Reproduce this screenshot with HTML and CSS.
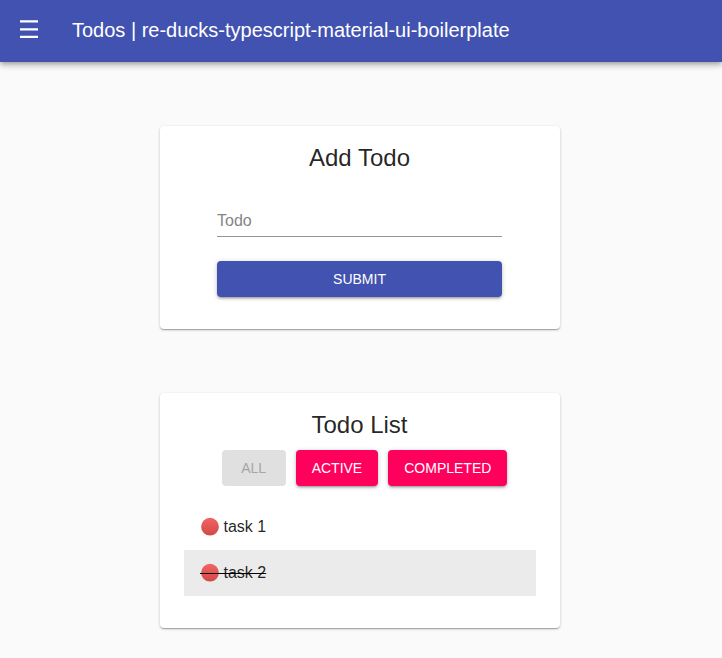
FILE: index.html
```html
<!DOCTYPE html>
<html lang="en">
<head>
<meta charset="utf-8">
<meta name="viewport" content="width=device-width, initial-scale=1">
<title>Todos</title>
<link rel="stylesheet" href="styles.css">
</head>
<body>
<header class="app-bar">
  <button class="menu-button" type="button" aria-label="Menu">
    <svg width="18" height="20" viewBox="0 0 18 20" aria-hidden="true"><path d="M0 0.3h18v2.2H0zM0 8.3h18v2.2H0zM0 15.8h18v2.2H0z" fill="currentColor"/></svg>
  </button>
  <h1 class="app-title">Todos | re-ducks-typescript-material-ui-boilerplate</h1>
</header>
<main class="content">
  <section class="card">
    <h2 class="card-title">Add Todo</h2>
    <form class="todo-form">
      <input class="text-field" type="text" placeholder="Todo" aria-label="Todo">
      <button class="button primary" type="button">SUBMIT</button>
    </form>
  </section>
  <section class="card">
    <h2 class="card-title">Todo List</h2>
    <div class="filters">
      <button class="button" type="button" disabled>ALL</button>
      <button class="button secondary" type="button">ACTIVE</button>
      <button class="button secondary" type="button">COMPLETED</button>
    </div>
    <ul class="todo-list">
      <li class="todo">
        <svg class="dot" viewBox="0 0 18 18" aria-hidden="true"><defs><linearGradient id="red" x1="0" y1="0" x2="0" y2="1"><stop offset="0" stop-color="#f06464"/><stop offset="1" stop-color="#d34747"/></linearGradient></defs><circle cx="10" cy="8.7" r="8.9" fill="url(#red)"/></svg>
        <span>task 1</span>
      </li>
      <li class="todo completed">
        <svg class="dot" viewBox="0 0 18 18" aria-hidden="true"><circle cx="10" cy="8.7" r="8.9" fill="url(#red)"/><path d="M0 9h25v1H0z" fill="#000"/></svg>
        <span>task 2</span>
      </li>
    </ul>
  </section>
</main>
</body>
</html>
```
FILE: styles.css
```css
* {
  box-sizing: border-box;
}

body {
  margin: 0;
  background: #fafafa;
  color: rgba(0, 0, 0, 0.87);
  font-family: "Liberation Sans", Arial, sans-serif;
  font-size: 16px;
}

.app-bar {
  display: flex;
  align-items: center;
  gap: 22px;
  padding: 6px 8px 8px;
  background: #4152b0;
  color: #fff;
  box-shadow: 0 2px 4px -1px rgba(0, 0, 0, 0.2), 0 4px 5px 0 rgba(0, 0, 0, 0.14), 0 1px 10px 0 rgba(0, 0, 0, 0.12);
}

.menu-button {
  display: flex;
  padding: 14px 12px;
  border: 0;
  background: none;
  color: inherit;
}

.app-title {
  margin: 0;
  font-size: 20px;
  font-weight: 400;
  line-height: 32px;
}

.content {
  display: flex;
  flex-direction: column;
  align-items: center;
  gap: 64px;
  padding: 64px 3px 28px 0;
}

.card {
  width: 100%;
  max-width: 400px;
  padding: 16px 24px 32px;
  border-radius: 4px;
  background: #fff;
  box-shadow: 0 1px 3px 0 rgba(0, 0, 0, 0.2), 0 1px 1px 0 rgba(0, 0, 0, 0.14), 0 2px 1px -1px rgba(0, 0, 0, 0.12);
}

.card-title {
  margin: 0;
  font-size: 24px;
  font-weight: 400;
  line-height: 32px;
  text-align: center;
}

.todo-form {
  display: flex;
  flex-direction: column;
  gap: 24px;
  max-width: 285px;
  margin: 32px auto 0;
}

.text-field {
  width: 100%;
  height: 31px;
  padding: 0;
  border: 0;
  border-bottom: 1px solid #949494;
  background: none;
  color: inherit;
  font: inherit;
}

.text-field::placeholder {
  color: #858585;
}

.button {
  min-width: 64px;
  height: 36px;
  padding: 0 16px;
  border: 0;
  border-radius: 4px;
  color: #fff;
  font-family: inherit;
  font-size: 14px;
  box-shadow: 0 1px 5px 0 rgba(0, 0, 0, 0.2), 0 2px 2px 0 rgba(0, 0, 0, 0.14), 0 3px 1px -2px rgba(0, 0, 0, 0.12);
}

.button:disabled {
  background: #e0e0e0;
  color: #a6a6a6;
  box-shadow: none;
}

.primary {
  background: #4152b0;
}

.secondary {
  background: #ff005d;
}

.filters {
  display: flex;
  justify-content: center;
  gap: 10px;
  margin: 9px 0 0 10px;
}

.todo-list {
  margin: 18px 0 0;
  padding: 0;
  list-style: none;
}

.todo {
  display: flex;
  align-items: center;
  gap: 6px;
  height: 46px;
  padding: 0 16px;
}

.dot {
  width: 18px;
  height: 18px;
  overflow: visible;
}

.completed {
  background: #ebebeb;
  text-decoration: line-through #000;
}
```
